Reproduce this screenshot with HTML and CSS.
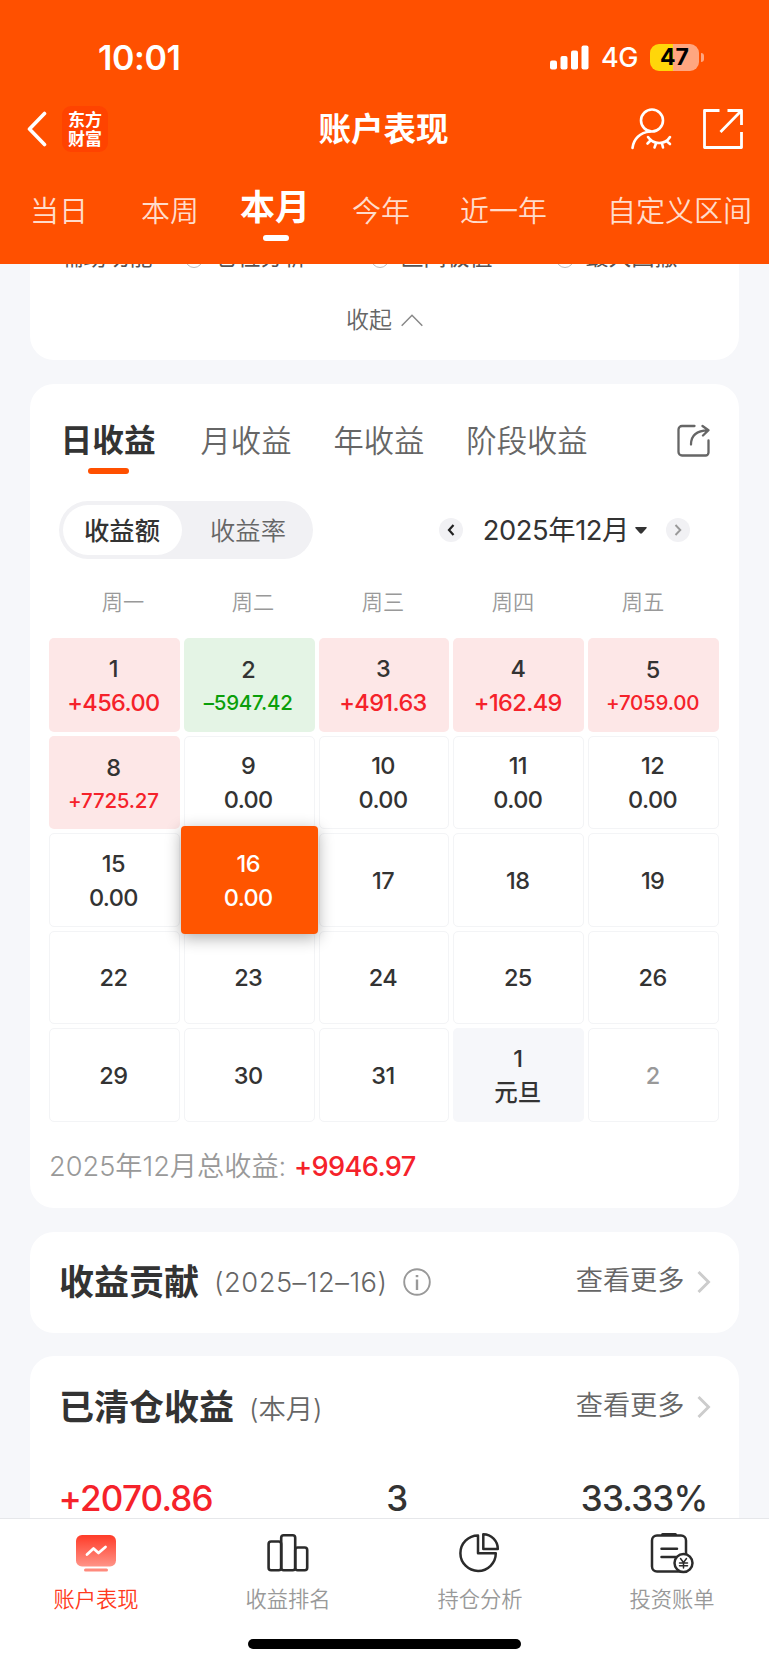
FILE: index.html
```html
<!DOCTYPE html>
<html lang="zh-CN">
<head>
  <meta charset="UTF-8">
  <meta name="viewport" content="width=device-width, initial-scale=1.0">
  <title>账户表现</title>
  <link rel="stylesheet" href="styles.css">
</head>
<body>
  <div class="app">
    <!-- Header -->
    <header class="header">
      <div class="status-bar">
        <span class="status-time">10:01</span>
        <div class="status-right">
          <svg class="signal" width="39" height="25" viewBox="0 0 39 25" fill="#fff">
            <rect x="0" y="15.5" width="7" height="9" rx="2"/>
            <rect x="10.5" y="11" width="7" height="13.500" rx="2"/>
            <rect x="21" y="5.500" width="7" height="19" rx="2"/>
            <rect x="31.500" y="0.500" width="7" height="24" rx="2"/>
          </svg>
          <span class="network">4G</span>
          <span class="battery">47</span>
          <span class="battery-tip"></span>
        </div>
      </div>
      <div class="nav-bar">
        <div class="nav-left">
          <svg width="20" height="36" viewBox="0 0 20 36" fill="none" stroke="#fff" stroke-width="3.600" stroke-linecap="round" stroke-linejoin="round"><path d="M17.500 2.500L2.500 18l15 15.500"/></svg>
          <div class="logo">东方<br>财富</div>
        </div>
        <h1>账户表现</h1>
        <div class="nav-right">
          <svg width="42" height="42" viewBox="0 0 42 42" fill="none" stroke="#fff" stroke-width="2.600" stroke-linecap="round">
            <circle cx="22" cy="12.500" r="11"/>
            <path d="M20 23.500C10 24.500 3.500 31 2.500 40"/>
            <path d="M18 29c5.500 8 17 8 22 0M21 32l-3.500 3.500M26 35.500l-1.500 4M32 35.500l1 4M36.500 33l3.500 3"/>
          </svg>
          <svg width="42" height="42" viewBox="0 0 42 42" fill="none" stroke="#fff" stroke-width="2.800" stroke-linejoin="round">
            <path d="M17.500 2.500H2.500v37h37V24M25.500 2.500h14V17M39 3L18.500 24"/>
          </svg>
        </div>
      </div>
      <nav class="range-tabs">
        <span>当日</span>
        <span>本周</span>
        <span class="active">本月</span>
        <span>今年</span>
        <span>近一年</span>
        <span>自定义区间</span>
      </nav>
    </header>

    <main class="content">
      <!-- Chart options, scrolled under the header -->
      <section class="card options">
        <div class="option-row">
          <span>辅助功能</span>
          <label><i></i>仓位分析</label>
          <label><i></i>区间极值</label>
          <label><i></i>最大回撤</label>
        </div>
        <div class="collapse">
          收起
          <svg width="22" height="13" viewBox="0 0 22 13" fill="none" stroke="#888" stroke-width="1.500"><path d="M.7 11.800L11 1.300l10.300 10.500"/></svg>
        </div>
      </section>

      <!-- Profit calendar -->
      <section class="card calendar">
        <div class="period-tabs">
          <span class="active">日收益</span>
          <span>月收益</span>
          <span>年收益</span>
          <span>阶段收益</span>
          <svg class="share" width="33" height="33" viewBox="0 0 33 33" fill="none" stroke="#666" stroke-width="2.300" stroke-linecap="round" stroke-linejoin="round">
            <path d="M17.500 2H5a3.500 3.500 0 0 0-3.500 3.500V28A3.500 3.500 0 0 0 5 31.500h23.500a3 3 0 0 0 3-3V16.500"/>
            <path d="M14 20.500C14 12 19 6.500 31 6.300M25.500 2l6 4.200-5.500 5.300"/>
          </svg>
        </div>

        <div class="toolbar">
          <div class="segment">
            <span class="active">收益额</span>
            <span>收益率</span>
          </div>
          <div class="month-picker">
            <span class="arrow"><svg width="8" height="12" viewBox="0 0 8 12" fill="none" stroke="#222" stroke-width="2.200"><path d="M6.500 1L2 6l4.500 5"/></svg></span>
            <span class="month">2025年12月</span>
            <svg class="caret" width="12" height="7" viewBox="0 0 12 7"><path d="M1 0h10q1.400.2.500 1.200L7 6.300q-1 .9-2 0L.5 1.200Q-.4.2 1 0z" fill="#333"/></svg>
            <span class="arrow"><svg width="8" height="12" viewBox="0 0 8 12" fill="none" stroke="#999" stroke-width="1.900"><path d="M1.500 1L6.300 6l-4.800 5"/></svg></span>
          </div>
        </div>

        <div class="weekdays">
          <span>周一</span><span>周二</span><span>周三</span><span>周四</span><span>周五</span>
        </div>

        <div class="days">
          <div class="day up"><b>1</b><em>+456.00</em></div>
          <div class="day down long"><b>2</b><em>–5947.42</em></div>
          <div class="day up"><b>3</b><em>+491.63</em></div>
          <div class="day up"><b>4</b><em>+162.49</em></div>
          <div class="day up long"><b>5</b><em>+7059.00</em></div>

          <div class="day up long"><b>8</b><em>+7725.27</em></div>
          <div class="day"><b>9</b><em>0.00</em></div>
          <div class="day"><b>10</b><em>0.00</em></div>
          <div class="day"><b>11</b><em>0.00</em></div>
          <div class="day"><b>12</b><em>0.00</em></div>

          <div class="day"><b>15</b><em>0.00</em></div>
          <div class="day selected"><b>16</b><em>0.00</em></div>
          <div class="day"><b>17</b></div>
          <div class="day"><b>18</b></div>
          <div class="day"><b>19</b></div>

          <div class="day"><b>22</b></div>
          <div class="day"><b>23</b></div>
          <div class="day"><b>24</b></div>
          <div class="day"><b>25</b></div>
          <div class="day"><b>26</b></div>

          <div class="day"><b>29</b></div>
          <div class="day"><b>30</b></div>
          <div class="day"><b>31</b></div>
          <div class="day holiday"><b>1</b><em>元旦</em></div>
          <div class="day other"><b>2</b></div>
        </div>

        <div class="total">2025年12月总收益: <strong>+9946.97</strong></div>
      </section>

      <!-- Contribution -->
      <section class="card contribution">
        <div class="card-head">
          <h2>收益贡献</h2>
          <span class="sub date">(2025–12–16)</span>
          <svg class="info" width="28" height="28" viewBox="0 0 28 28" fill="none" stroke="#999" stroke-width="1.900">
            <circle cx="14" cy="14" r="12.800"/>
            <path d="M14 11.500v10.500" stroke-width="2.400"/>
            <path d="M14 7v2.200" stroke-width="2.600"/>
          </svg>
          <span class="more">查看更多</span>
          <svg width="14" height="22" viewBox="0 0 14 22" fill="none" stroke="#ccc" stroke-width="2.900"><path d="M1.500 1L11.500 11l-10 10"/></svg>
        </div>
      </section>

      <!-- Closed positions -->
      <section class="card closed">
        <div class="card-head">
          <h2>已清仓收益</h2>
          <span class="sub">(本月)</span>
          <span class="more">查看更多</span>
          <svg width="14" height="22" viewBox="0 0 14 22" fill="none" stroke="#ccc" stroke-width="2.900"><path d="M1.500 1L11.500 11l-10 10"/></svg>
        </div>
        <div class="stats">
          <span class="red">+2070.86</span>
          <span>3</span>
          <span>33.33%</span>
        </div>
      </section>
    </main>

    <!-- Tab bar -->
    <footer class="tab-bar">
      <div class="tabs">
        <div class="tab active">
          <svg width="42" height="42" viewBox="0 0 42 42" fill="none">
            <defs>
              <linearGradient id="screen" x1="0" y1="0" x2="0" y2="1">
                <stop offset="0" stop-color="#ff3b28"/>
                <stop offset="1" stop-color="#ff9488"/>
              </linearGradient>
            </defs>
            <rect x="1" y="3" width="40" height="31.500" rx="6" fill="url(#screen)"/>
            <rect x="9" y="36.500" width="24" height="3" rx="1.500" fill="#ff8a7d"/>
            <path d="M12 22.500l6.500-6 5 4.500 7-6" stroke="#fff" stroke-width="2.800" stroke-linecap="round" stroke-linejoin="round"/>
          </svg>
          <span>账户表现</span>
        </div>
        <div class="tab">
          <svg width="42" height="42" viewBox="0 0 42 42" fill="none" stroke="#2b2b2b" stroke-width="2.600">
            <rect x="1.600" y="9.500" width="12.600" height="28.800" rx="2.500"/>
            <rect x="14.200" y="3.200" width="14" height="35.100" rx="2.500"/>
            <rect x="28.200" y="15.500" width="12" height="22.800" rx="2.500"/>
          </svg>
          <span>收益排名</span>
        </div>
        <div class="tab">
          <svg width="42" height="42" viewBox="0 0 42 42" fill="none" stroke="#2b2b2b" stroke-width="2.500" stroke-linejoin="round">
            <path d="M19 3.500A17.700 17.700 0 1 0 36.800 21.300H19z"/>
            <path d="M24.300 2.200v14.700h14.500A14.600 14.600 0 0 0 24.300 2.200z"/>
          </svg>
          <span>持仓分析</span>
        </div>
        <div class="tab">
          <svg width="44" height="42" viewBox="0 0 44 42" fill="none" stroke="#2b2b2b" stroke-width="2.500" stroke-linecap="round">
            <rect x="2" y="3.500" width="34" height="36" rx="5"/>
            <path d="M12.500 2.600h13" stroke-width="3"/>
            <path d="M11.500 16.700h15.500M11.500 25h14"/>
            <circle cx="33.500" cy="31" r="9" fill="#fff"/>
            <path d="M30.500 26.500l3 4 3-4M33.500 30.500v5.500M29.500 31h8M29.500 33.700h8" stroke-width="1.500"/>
          </svg>
          <span>投资账单</span>
        </div>
      </div>
      <div class="home-indicator"></div>
    </footer>
  </div>
</body>
</html>
```
FILE: styles.css
```css
* {
  box-sizing: border-box;
}
body {
  margin: 0;
  font-family: Inter, "Noto Sans CJK SC", sans-serif;
  color: #333;
  background-color: #f6f7fa;
}
h1, h2 {
  margin: 0;
}
b, em, i {
  font-weight: inherit;
  font-style: normal;
}
svg {
  display: block;
  flex: none;
}
.app {
  display: flex;
  flex-direction: column;
  height: 1665px;
  overflow: hidden;
}

/* Header */
.header {
  flex: none;
  height: 264px;
  background-color: #ff5000;
  color: #fff;
}
.status-bar {
  display: flex;
  justify-content: space-between;
  align-items: center;
  height: 94px;
  padding: 21px 65px 0 98px;
}
.status-time {
  font-size: 34px;
  font-weight: 600;
  letter-spacing: -0.4px;
}
.status-right {
  display: flex;
  align-items: center;
}
.network {
  margin-left: 12px;
  font-size: 27px;
  font-weight: 500;
  letter-spacing: -0.5px;
  width: 37px;
}
.battery {
  margin-left: 12px;
  width: 49px;
  height: 27px;
  border-radius: 9px;
  background: linear-gradient(90deg, #ffd60a 46%, #ffa680 46%);
  color: #000;
  font-size: 23px;
  font-weight: 700;
  line-height: 27px;
  text-align: center;
}
.battery-tip {
  width: 3px;
  height: 9px;
  margin-left: 2px;
  border-radius: 0 3px 3px 0;
  background-color: #ffa680;
}
.nav-bar {
  display: grid;
  grid-template-columns: 1fr auto 1fr;
  align-items: center;
  height: 70px;
  padding: 0 25px 0 27px;
}
.nav-left {
  display: flex;
  align-items: center;
  gap: 15px;
}
.logo {
  width: 46px;
  height: 46px;
  padding-top: 5px;
  border-radius: 9px;
  background-color: #ff4300;
  font-size: 17px;
  font-weight: 700;
  line-height: 19px;
  text-align: center;
}
.nav-bar h1 {
  margin: 2px 4px 0 0;
  font-size: 32.5px;
  font-weight: 700;
  line-height: 40px;
}
.nav-right {
  display: flex;
  justify-content: flex-end;
  gap: 30px;
}
.range-tabs {
  display: grid;
  grid-template-columns: 111px 99px 112px 108px 147px auto;
  padding: 28px 0 0 30px;
  font-size: 29px;
  font-weight: 350;
  line-height: 40px;
  white-space: nowrap;
  color: #ffdccb;
}
.range-tabs .active {
  width: 72px;
  margin-top: -5px;
  font-size: 35px;
  font-weight: 700;
  color: #fff;
}
.range-tabs .active::after {
  content: "";
  display: block;
  width: 26px;
  height: 6px;
  margin: 8px auto 0;
  border-radius: 3px;
  background-color: #fff;
}

/* Content */
.content {
  flex: 1;
  min-height: 0;
  overflow: hidden;
  padding: 0 30.5px 0 29.5px;
}
.card {
  margin-bottom: 24px;
  border-radius: 24px;
  background-color: #fff;
}
.options {
  height: 136px;
  margin-top: -40px;
  border-radius: 0 0 24px 24px;
}
.option-row {
  display: grid;
  grid-template-columns: 124px 186px 185px auto;
  padding: 17px 0 0 31px;
  font-size: 23px;
  line-height: 32px;
  color: #555;
}
.option-row label {
  display: flex;
  align-items: center;
  gap: 12px;
}
.option-row i {
  width: 18px;
  height: 18px;
  margin-top: 4px;
  border: 1.5px solid #bbb;
  border-radius: 50%;
}
.collapse {
  display: flex;
  justify-content: center;
  align-items: center;
  gap: 9px;
  margin: 32px 0 0 1px;
  font-size: 23px;
  font-weight: 350;
  line-height: 30px;
  color: #666;
}

/* Calendar */
.calendar {
  height: 823.5px;
  padding: 35px 19.5px 0;
}
.period-tabs {
  display: flex;
  padding: 0 9px 0 11.5px;
  font-size: 30.3px;
  font-weight: 350;
  line-height: 44px;
  color: #666;
}
.period-tabs span {
  margin-right: 42px;
}
.period-tabs .active {
  margin-right: 45px;
  font-size: 31.7px;
  font-weight: 700;
  color: #333;
}
.period-tabs .active::after {
  content: "";
  display: block;
  width: 41px;
  height: 6px;
  margin: 5px auto 0;
  border-radius: 3px;
  background-color: #ff5000;
}
.period-tabs .share {
  margin: 5px 0 0 auto;
}
.toolbar {
  display: flex;
  justify-content: space-between;
  align-items: center;
  margin-top: 27px;
  padding: 0 29px 0 10px;
}
.segment {
  display: flex;
  width: 254px;
  height: 58px;
  padding: 4px;
  border-radius: 29px;
  background-color: #f1f1f4;
  font-size: 25.3px;
  font-weight: 350;
  line-height: 51px;
  text-align: center;
  color: #666;
}
.segment span {
  flex: 1;
  padding-left: 5px;
}
.segment .active {
  flex: none;
  width: 119px;
  padding: 0 1px 0 0;
  border-radius: 25px;
  background-color: #fff;
  font-weight: 500;
  color: #333;
}
.month-picker {
  display: flex;
  align-items: center;
}
.arrow {
  display: flex;
  justify-content: center;
  align-items: center;
  width: 24px;
  height: 24px;
  border-radius: 50%;
  background-color: #f1f1f4;
}
.month {
  margin: 1px 0 0 20px;
  font-size: 27.3px;
  line-height: 40px;
  letter-spacing: -0.4px;
}
.caret {
  margin: 0 19px 0 6px;
}
.weekdays {
  display: grid;
  grid-template-columns: repeat(5, 130px);
  padding-left: 9px;
  margin-top: 27px;
  font-size: 21.2px;
  font-weight: 350;
  line-height: 32px;
  text-align: center;
  color: #999;
}
.days {
  display: grid;
  grid-template-columns: repeat(5, 1fr);
  grid-auto-rows: 93.5px;
  gap: 4px;
  margin-top: 20px;
}
.day {
  display: flex;
  flex-direction: column;
  justify-content: center;
  align-items: center;
  padding: 2px 2px 0 0;
  border: 1px solid #f3f4f6;
  border-radius: 5px;
  font-size: 23.5px;
  font-weight: 500;
  line-height: 34px;
  letter-spacing: -0.6px;
}
.day.up, .day.down {
  border: 0;
}
.day.up {
  background-color: #fde7e7;
}
.day.up em, .red {
  color: #f5222a;
}
.day.down {
  background-color: #e4f4e5;
}
.day.down em {
  color: #0a9f0a;
}
.day.long em {
  font-size: 20.5px;
  line-height: 31px;
  letter-spacing: -0.2px;
}
.day.selected {
  z-index: 1;
  margin: -7px -3px;
  border: 0;
  border-radius: 4px;
  background-color: #ff5500;
  box-shadow: 0 4px 16px rgba(0, 0, 0, 0.32);
  color: #fff;
}
.day.holiday {
  border: 0;
  background-color: #f6f7fa;
}
.day.holiday em {
  letter-spacing: 0;
}
.day.other {
  color: #999;
}
.total {
  margin-top: 25px;
  font-size: 27.2px;
  font-weight: 350;
  line-height: 40px;
  color: #999;
}
.total strong {
  font-weight: 500;
  letter-spacing: -0.6px;
  color: #f5222a;
}

/* Summary cards */
.card-head {
  display: flex;
  align-items: center;
  height: 101px;
  padding: 0 28px 0 29.5px;
}
.card-head h2 {
  font-size: 35px;
  font-weight: 700;
  line-height: 48px;
}
.card-head .sub {
  margin-left: 15px;
  font-size: 27.3px;
  font-weight: 350;
  color: #666;
}
.card-head .date {
  letter-spacing: 0.5px;
}
.card-head .info {
  margin-left: 15px;
}
.card-head .more {
  margin: 0 12px 2px auto;
  font-size: 27.2px;
  font-weight: 350;
  line-height: 40px;
  color: #666;
}
.contribution {
  height: 101.5px;
  margin-bottom: 23px;
}
.closed {
  height: 300px;
}
.stats {
  display: flex;
  justify-content: space-between;
  margin-top: 19px;
  padding: 0 31px 0 29px;
  font-size: 35px;
  font-weight: 500;
  line-height: 44px;
  letter-spacing: -0.8px;
}

/* Tab bar */
.tab-bar {
  flex: none;
  height: 147px;
  border-top: 1px solid #e6e7ea;
  background-color: #fff;
}
.tabs {
  display: grid;
  grid-template-columns: repeat(4, 1fr);
  height: 120px;
  padding: 13px 1px 0 0;
}
.tab {
  display: flex;
  flex-direction: column;
  align-items: center;
  font-size: 21.3px;
  font-weight: 350;
  line-height: 30px;
  color: #999;
}
.tab span {
  margin-top: 10px;
}
.tab.active {
  color: #ff3a20;
}
.home-indicator {
  width: 273px;
  height: 10px;
  margin: 0 auto;
  border-radius: 5px;
  background-color: #000;
}
```
